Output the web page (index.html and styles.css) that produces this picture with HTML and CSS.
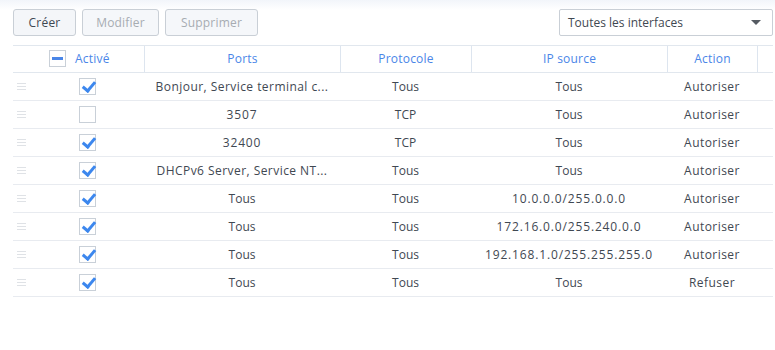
FILE: index.html
```html
<!DOCTYPE html>
<html lang="fr">
<head>
<meta charset="utf-8">
<link rel="stylesheet" href="styles.css">
</head>
<body>
<div class="page">
  <div class="toolbar">
    <div class="btns">
      <button class="btn w-create">Créer</button>
      <button class="btn w-edit" disabled>Modifier</button>
      <button class="btn w-del" disabled>Supprimer</button>
    </div>
    <div class="select"><span>Toutes les interfaces</span><i class="caret"></i></div>
  </div>

  <div class="grid">
    <div class="row head">
      <div class="c c-first"><span class="cb partial"></span><span>Activé</span></div>
      <div class="c sep">Ports</div>
      <div class="c sep">Protocole</div>
      <div class="c sep">IP source</div>
      <div class="c sep">Action</div>
      <div class="c sep"></div>
    </div>

    <div class="row">
      <div class="c drag"><i class="handle"></i></div>
      <div class="c chk"><span class="cb on"></span></div>
      <div class="c long">Bonjour, Service terminal c...</div>
      <div class="c">Tous</div>
      <div class="c">Tous</div>
      <div class="c wide">Autoriser</div>
      <div class="c"></div>
    </div>
    <div class="row">
      <div class="c drag"><i class="handle"></i></div>
      <div class="c chk"><span class="cb"></span></div>
      <div class="c num">3507</div>
      <div class="c">TCP</div>
      <div class="c">Tous</div>
      <div class="c wide">Autoriser</div>
      <div class="c"></div>
    </div>
    <div class="row">
      <div class="c drag"><i class="handle"></i></div>
      <div class="c chk"><span class="cb on"></span></div>
      <div class="c num">32400</div>
      <div class="c">TCP</div>
      <div class="c">Tous</div>
      <div class="c wide">Autoriser</div>
      <div class="c"></div>
    </div>
    <div class="row">
      <div class="c drag"><i class="handle"></i></div>
      <div class="c chk"><span class="cb on"></span></div>
      <div class="c long">DHCPv6 Server, Service NT...</div>
      <div class="c">Tous</div>
      <div class="c">Tous</div>
      <div class="c wide">Autoriser</div>
      <div class="c"></div>
    </div>
    <div class="row">
      <div class="c drag"><i class="handle"></i></div>
      <div class="c chk"><span class="cb on"></span></div>
      <div class="c">Tous</div>
      <div class="c">Tous</div>
      <div class="c num">10.0.0.0/255.0.0.0</div>
      <div class="c wide">Autoriser</div>
      <div class="c"></div>
    </div>
    <div class="row">
      <div class="c drag"><i class="handle"></i></div>
      <div class="c chk"><span class="cb on"></span></div>
      <div class="c">Tous</div>
      <div class="c">Tous</div>
      <div class="c num">172.16.0.0/255.240.0.0</div>
      <div class="c wide">Autoriser</div>
      <div class="c"></div>
    </div>
    <div class="row">
      <div class="c drag"><i class="handle"></i></div>
      <div class="c chk"><span class="cb on"></span></div>
      <div class="c">Tous</div>
      <div class="c">Tous</div>
      <div class="c num">192.168.1.0/255.255.255.0</div>
      <div class="c wide">Autoriser</div>
      <div class="c"></div>
    </div>
    <div class="row">
      <div class="c drag"><i class="handle"></i></div>
      <div class="c chk"><span class="cb on"></span></div>
      <div class="c">Tous</div>
      <div class="c">Tous</div>
      <div class="c">Tous</div>
      <div class="c wide">Refuser</div>
      <div class="c"></div>
    </div>
  </div>
</div>
</body>
</html>
```

FILE: styles.css
```css
* { box-sizing: border-box; }
html, body { margin: 0; height: 100%; }
body {
  background: linear-gradient(#f2f5fa 0px, #ffffff 10px) no-repeat;
  background-color: #fff;
  font-family: "Open Sans", "Noto Sans", sans-serif;
  font-size: 12px;
  color: #3f4852;
}
.page { padding: 9px 2px 0 13px; }

.toolbar {
  display: flex;
  justify-content: space-between;
  align-items: flex-start;
  height: 36px;
}
.btns { display: flex; gap: 6px; }
.btn {
  height: 27px;
  padding: 0;
  border: 1px solid #c9cfd6;
  border-radius: 3px;
  background: #f4f6f9;
  font: inherit;
  color: #3f4852;
  letter-spacing: 0.2px;
}
.btn:disabled { color: #a7acb2; background: #f5f7fa; }
.w-create { width: 63px; }
.w-edit { width: 77px; }
.w-del { width: 93px; }

.select {
  width: 214px;
  height: 27px;
  border: 1px solid #c9cfd6;
  border-radius: 2px;
  display: flex;
  align-items: center;
  justify-content: space-between;
  padding: 0 11px 0 8px;
  background: #fff;
}
.caret {
  width: 0; height: 0;
  border-left: 5px solid transparent;
  border-right: 5px solid transparent;
  border-top: 5px solid #555b62;
}

.grid { border-top: 1px solid #e1e7ee; }
.row {
  display: grid;
  grid-template-columns: 32px 99px 196px 131px 196px 90px 1fr;
  height: 28px;
  border-bottom: 1px solid #e8ebf0;
}
.row.head {
  height: 27px;
  grid-template-columns: 131px 196px 131px 196px 90px 1fr;
  color: #4a86e8;
  border-bottom-color: #e1e7ee;
  letter-spacing: 0.2px;
}
.c {
  display: flex;
  align-items: center;
  justify-content: center;
  white-space: nowrap;
  overflow: hidden;
  padding: 0 6px;
}
.head .c { padding-bottom: 1px; }
.sep { border-left: 1px solid #dde5ef; }
.c-first { justify-content: flex-start; padding-left: 36px; gap: 9px; }

.num { letter-spacing: 0.85px; }
.long { letter-spacing: 0.45px; }
.wide { letter-spacing: 0.45px; }

.drag { justify-content: flex-start; padding-left: 4px; }
.handle {
  display: block;
  width: 9px;
  height: 7px;
  background: linear-gradient(#dfe2e6 0 1px, transparent 1px 3px, #dfe2e6 3px 4px, transparent 4px 6px, #dfe2e6 6px 7px);
}
.chk { justify-content: flex-start; padding-left: 34px; }

.cb {
  position: relative;
  display: inline-block;
  width: 17px;
  height: 17px;
  border: 1px solid #c9d0d8;
  background: #fff;
  flex: none;
}
.cb.partial::after {
  content: "";
  position: absolute;
  left: 2px; top: 6px;
  width: 11px; height: 3px;
  background: #4a86e8;
}
.cb.on::after {
  content: "";
  position: absolute;
  left: 5px; top: 0px;
  width: 5px; height: 10px;
  border-right: 3px solid #3c87ee;
  border-bottom: 3px solid #3c87ee;
  transform: rotate(40deg);
  transform-origin: center;
}
```
